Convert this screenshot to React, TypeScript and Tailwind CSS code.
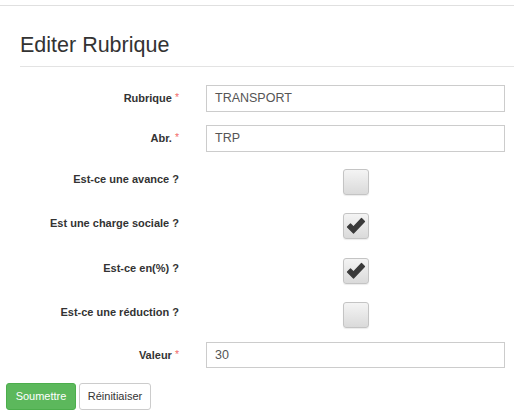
import type { ReactNode } from "react";

function Req() {
  return (
    <span className="relative -top-[1px] ml-[3px] text-[10.5px] font-normal text-[#f26b6b]">*</span>
  );
}

function Label({ children, shift }: { children: ReactNode; shift?: boolean }) {
  return (
    <div
      className={
        "w-[179px] shrink-0 text-right text-[11px] font-bold text-[#333]" +
        (shift ? " mb-[5px]" : "")
      }
    >
      {children}
    </div>
  );
}

function TextRow({ label, value, className }: { label: string; value: string; className: string }) {
  return (
    <div className={"flex items-center " + className}>
      <Label>
        {label}
        <Req />
      </Label>
      <div className="ml-[27px] flex h-[27px] w-[299px] items-center border border-[#ccc] bg-white pl-[8px] text-[12.5px] text-[#555]">
        {value}
      </div>
    </div>
  );
}

function Box({ checked }: { checked: boolean }) {
  return (
    <div className="flex h-[26px] w-[26px] items-center justify-center rounded-[3px] border border-[#c4c4c4] bg-gradient-to-b from-[#f4f4f4] to-[#dadada] shadow-[0_1px_1px_rgba(0,0,0,0.08)]">
      {checked ? (
        <svg width="20" height="18" viewBox="0 0 20 18">
          <path
            d="M1.5 10 L4.5 7 L7.5 10 L15.5 1.5 L18.5 4.5 L7.5 16 Z"
            fill="#3a3a3a"
            stroke="#3a3a3a"
            strokeWidth="1.2"
            strokeLinejoin="round"
          />
        </svg>
      ) : null}
    </div>
  );
}

function CheckRow({ label, checked, className }: { label: string; checked: boolean; className: string }) {
  return (
    <div className={"flex h-[26px] items-center " + className}>
      <Label shift>{label}</Label>
      <div className="ml-[27px] flex w-[299px] justify-center">
        <Box checked={checked} />
      </div>
    </div>
  );
}

export default function App() {
  return (
    <div className="h-[416px] w-[514px] overflow-hidden bg-white font-['Liberation_Sans',Arial,sans-serif]">
      <div className="pt-[5px]">
        <div className="border-t border-[#e0e0e0]" />
      </div>
      <div className="ml-[20px] mt-[28px] border-b border-[#e3e3e3] pb-[9px]">
        <h3 className="text-[21.5px] leading-[23px] text-[#333]">Editer Rubrique</h3>
      </div>

      <TextRow label="Rubrique" value="TRANSPORT" className="mt-[18px]" />
      <TextRow label="Abr." value="TRP" className="mt-[13px]" />
      <CheckRow label="Est-ce une avance ?" checked={false} className="mt-[17px]" />
      <CheckRow label="Est une charge sociale ?" checked className="mt-[18px]" />
      <CheckRow label="Est-ce en(%) ?" checked className="mt-[19px]" />
      <CheckRow label="Est-ce une réduction ?" checked={false} className="mt-[18px]" />
      <div className="mt-[14px] flex items-center">
        <Label>
          Valeur
          <Req />
        </Label>
        <div className="ml-[27px] flex h-[26px] w-[299px] items-center border border-[#ccc] bg-white pl-[8px] text-[12.5px] text-[#555]">
          30
        </div>
      </div>

      <div className="ml-[6px] mt-[15px] flex gap-[3px]">
        <button
          type="button"
          className="h-[27px] w-[70px] rounded-[3px] border border-[#4cae4c] bg-[#5cb85c] text-[11px] text-white"
        >
          Soumettre
        </button>
        <button
          type="button"
          className="h-[27px] w-[72px] rounded-[3px] border border-[#ccc] bg-white text-[11px] text-[#333]"
        >
          Réinitiaiser
        </button>
      </div>
    </div>
  );
}
